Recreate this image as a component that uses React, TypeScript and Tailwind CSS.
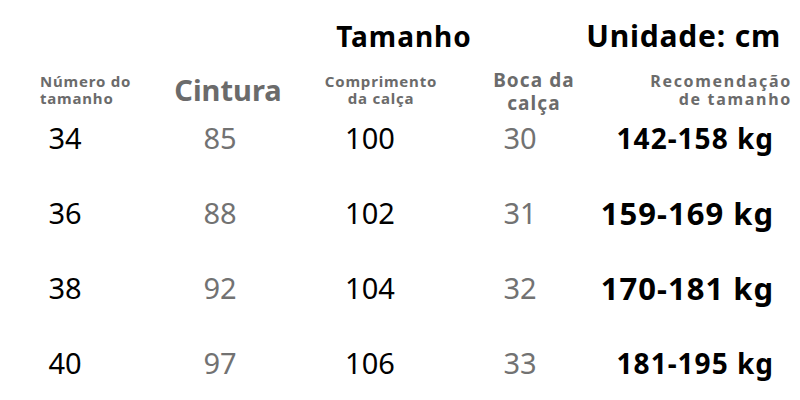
const rows = [
  { size: '34', waist: '85', length: '100', hem: '30', rec: '142-158 kg', recSize: 'text-[28px]' },
  { size: '36', waist: '88', length: '102', hem: '31', rec: '159-169 kg', recSize: 'text-[31px]' },
  { size: '38', waist: '92', length: '104', hem: '32', rec: '170-181 kg', recSize: 'text-[31px]' },
  { size: '40', waist: '97', length: '106', hem: '33', rec: '181-195 kg', recSize: 'text-[28px]' },
];

export default function App() {
  return (
    <div
      className="w-[800px] h-[400px] bg-white overflow-hidden"
      style={{ fontFamily: '"Noto Sans", "Noto Sans CJK SC", sans-serif' }}
    >
      {/* title */}
      <div className="grid grid-cols-[324px_160px_316px] items-end pt-[18px] h-[52px] leading-[32px] font-bold text-black">
        <div />
        <div className="text-center text-[28px] tracking-[1px]">Tamanho</div>
        <div className="text-right pr-[19px] text-[30px] tracking-[0.8px]">Unidade: cm</div>
      </div>

      {/* column headers */}
      <div className="grid grid-cols-[132px_192px_114px_192px_170px] items-center h-[66px] pt-[10px] font-bold text-[#6b6b6b]">
        <div className="pl-[40px] text-[15px] leading-[17px] tracking-[0.8px] whitespace-nowrap">
          Número do
          <br />
          tamanho
        </div>
        <div className="text-center text-[29px] leading-[32px]">Cintura</div>
        <div className="text-center text-[15px] leading-[17px] tracking-[0.8px] whitespace-nowrap">
          Comprimento
          <br />
          da calça
        </div>
        <div className="text-center text-[19px] leading-[23px] tracking-[1.1px] pt-[4px]">
          Boca da
          <br />
          calça
        </div>
        <div className="text-right pr-[8px] text-[16px] leading-[18px] tracking-[1.7px] whitespace-nowrap">
          Recomendação
          <br />
          de tamanho
        </div>
      </div>

      {/* data */}
      <div className="flex flex-col gap-[35px]">
        {rows.map(r => (
          <div
            key={r.size}
            className="grid grid-cols-[130px_180px_120px_180px_190px] items-center h-[40px] text-[29px] leading-[40px]"
          >
            <div className="text-center text-black">{r.size}</div>
            <div className="text-center text-[#727272]">{r.waist}</div>
            <div className="text-center text-black">{r.length}</div>
            <div className="text-center text-[#727272]">{r.hem}</div>
            <div className="flex justify-end pr-[26px]">
              <span className={`font-bold tracking-[1px] text-black whitespace-nowrap ${r.recSize}`}>
                {r.rec}
              </span>
            </div>
          </div>
        ))}
      </div>
    </div>
  );
}
